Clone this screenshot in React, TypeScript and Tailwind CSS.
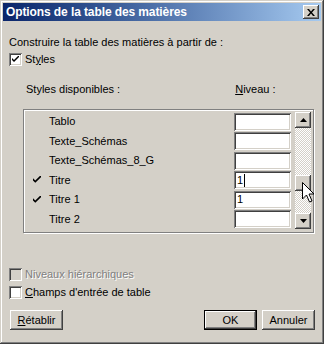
const raised =
  'shadow-[inset_-1px_-1px_#404040,inset_1px_1px_#ffffff,inset_-2px_-2px_#808080]';
const sunken =
  'shadow-[inset_1px_1px_#808080,inset_-1px_-1px_#ffffff,inset_2px_2px_#404040,inset_-2px_-2px_#d4d0c8]';

function CheckBox({ checked, disabled }: { checked?: boolean; disabled?: boolean }) {
  return (
    <div
      className={`w-[13px] h-[13px] flex items-center justify-center shrink-0 ${sunken} ${
        disabled ? 'bg-[#d4d0c8]' : 'bg-white'
      }`}
    >
      {checked && (
        <svg width="7" height="7" viewBox="0 0 7 7">
          <path d="M0 2 L0 4 L2 6 L7 1 L7 -1 L2 4 Z" fill="#000" />
        </svg>
      )}
    </div>
  );
}

function Tick() {
  return (
    <svg width="8" height="8" viewBox="0 0 7 7">
      <path d="M0 2 L0 4 L2 6 L7 1 L7 -1 L2 4 Z" fill="#000" />
    </svg>
  );
}

function Arrow({ up }: { up?: boolean }) {
  return (
    <div className={`w-[16px] h-[16px] bg-[#d4d0c8] flex items-center justify-center ${raised}`}>
      <svg width="7" height="4" viewBox="0 0 7 4">
        <path d={up ? 'M3.5 0 L7 4 L0 4 Z' : 'M0 0 L7 0 L3.5 4 Z'} fill="#000" />
      </svg>
    </div>
  );
}

function Button({ children, isDefault }: { children: React.ReactNode; isDefault?: boolean }) {
  return (
    <div
      className={`w-[53px] h-[20px] flex items-center justify-center bg-[#d4d0c8] ${
        isDefault
          ? 'shadow-[inset_0_0_0_1px_#000000,inset_-2px_-2px_#404040,inset_2px_2px_#ffffff,inset_-3px_-3px_#808080]'
          : raised
      }`}
    >
      {children}
    </div>
  );
}

const rows = [
  { name: 'Tablo', level: '' },
  { name: 'Texte_Schémas', level: '' },
  { name: 'Texte_Schémas_8_G', level: '' },
  { name: 'Titre', level: '1', checked: true, caret: true },
  { name: 'Titre 1', level: '1', checked: true },
  { name: 'Titre 2', level: '' },
];

export default function App() {
  return (
    <div
      className="relative w-[324px] h-[344px] bg-[#d4d0c8] p-[3px] flex flex-col text-[11px] leading-[13px] text-black shadow-[inset_-1px_-1px_#404040,inset_1px_1px_#d4d0c8,inset_-2px_-2px_#808080,inset_2px_2px_#ffffff]"
      style={{ fontFamily: '"Liberation Sans", Arial, sans-serif' }}
    >
      {/* Title bar */}
      <div className="h-[18px] flex items-center bg-linear-to-r from-[#0a246a] to-[#a6caf0] pl-[3px] pr-[2px]">
        <span className="text-white font-bold text-[12px] tracking-[-0.1px]">
          Options de la table des matières
        </span>
        <div className={`ml-auto w-[16px] h-[14px] bg-[#d4d0c8] flex items-center justify-center ${raised}`}>
          <svg width="8" height="7" viewBox="0 0 8 7">
            <path d="M0 0 L2 0 L4 2.5 L6 0 L8 0 L5 3.5 L8 7 L6 7 L4 4.5 L2 7 L0 7 L3 3.5 Z" fill="#000" />
          </svg>
        </div>
      </div>

      <div className="pl-[6px] mt-[15px]">Construire la table des matières à partir de :</div>

      <div className="pl-[6px] mt-[4px] flex items-center gap-[3px]">
        <CheckBox checked />
        <span>
          St<span className="underline">y</span>les
        </span>
      </div>

      <div className="mt-[17px] flex">
        <span className="pl-[23px]">Styles disponibles :</span>
        <span className="ml-[115px]">
          <span className="underline">N</span>iveau :
        </span>
      </div>

      {/* Group frame */}
      <div className="mt-[13px] ml-[20px] w-[291px] h-[124px] border border-[#808080] shadow-[inset_1px_1px_#ffffff,1px_1px_#ffffff] pt-[2px] pr-[2px] flex">
        <div className="flex-1 flex flex-col">
          {rows.map((r) => (
            <div key={r.name} className="h-[19.5px] flex items-center">
              <div className="w-[16px] ml-[9px] flex items-center">{r.checked && <Tick />}</div>
              <span>{r.name}</span>
              <div className={`ml-auto mr-[4px] w-[57px] h-[18px] bg-white flex items-center pl-[3px] ${sunken}`}>
                <span>{r.level}</span>
                {r.caret && <span className="w-[1px] h-[13px] bg-black ml-[1px]" />}
              </div>
            </div>
          ))}
        </div>
        <div className="w-[16px] h-[117px] flex flex-col">
          <Arrow up />
          <div className="h-[47px] bg-[repeating-conic-gradient(#ffffff_0_25%,#d4d0c8_0_50%)] bg-[length:2px_2px]" />
          <div className={`h-[16px] bg-[#d4d0c8] ${raised}`} />
          <div className="flex-1 bg-[repeating-conic-gradient(#ffffff_0_25%,#d4d0c8_0_50%)] bg-[length:2px_2px]" />
          <Arrow />
        </div>
      </div>

      <div className="pl-[6px] mt-[35px] flex items-center gap-[3px] h-[13px]">
        <CheckBox disabled />
        <span className="text-[#808080] [text-shadow:1px_1px_0_#ffffff]">Niveaux hiérarchiques</span>
      </div>
      <div className="pl-[6px] mt-[5px] flex items-center gap-[3px] h-[13px]">
        <CheckBox />
        <span>
          <span className="underline">C</span>hamps d'entrée de table
        </span>
      </div>

      <div className="mt-[11px] pl-[7px] flex items-center">
        <Button>
          <span>
            <span className="underline">R</span>établir
          </span>
        </Button>
        <div className="ml-auto flex gap-[5px] pr-[6px]">
          <Button isDefault>OK</Button>
          <Button>Annuler</Button>
        </div>
      </div>

      {/* Mouse cursor */}
      <svg className="absolute left-[302px] top-[182px]" width="13" height="21" viewBox="0 0 13 21">
        <path
          d="M0.5 0.5 L0.5 17 L4.5 13 L7.5 20 L10 19 L7 12 L12 12 Z"
          fill="#ffffff"
          stroke="#000000"
          strokeWidth="1"
        />
      </svg>
    </div>
  );
}
